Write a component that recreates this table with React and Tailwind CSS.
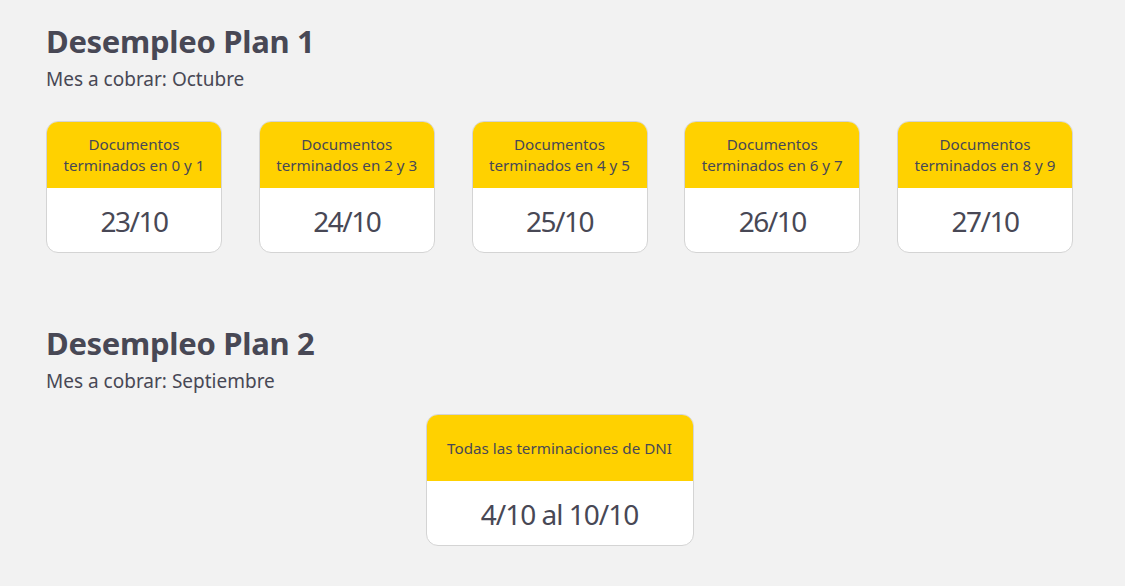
export default function App() {
  const cards = [
    ["0 y 1", "23/10"],
    ["2 y 3", "24/10"],
    ["4 y 5", "25/10"],
    ["6 y 7", "26/10"],
    ["8 y 9", "27/10"],
  ];
  const font = { fontFamily: '"Noto Sans", "Open Sans", sans-serif' };
  return (
    <div className="min-h-[586px] w-full bg-[#f2f2f2] text-[#484855]" style={font}>
      <div className="pl-[46px] pt-[20px] w-[1073px]">
        <h1 className="text-[31px] font-bold leading-[42px] tracking-[-0.3px]">Desempleo Plan 1</h1>
        <p className="text-[19px] leading-[26px] mt-[4px]">Mes a cobrar: Octubre</p>
        <div className="flex justify-between mt-[29px]">
          {cards.map(([t, d]) => (
            <div key={t} className="w-[176px] h-[132px] rounded-[12px] overflow-hidden border border-[#d4d4d4] bg-white flex flex-col">
              <div className="h-[66px] bg-[#ffd100] flex items-center justify-center text-center text-[15.2px] leading-[21px] px-1">
                <span>Documentos<br />terminados en {t}</span>
              </div>
              <div className="flex-1 flex items-center justify-center text-[28px] tracking-[-1.5px] pt-[2px]">{d}</div>
            </div>
          ))}
        </div>
        <h1 className="text-[31px] font-bold leading-[42px] tracking-[-0.3px] mt-[69px]">Desempleo Plan 2</h1>
        <p className="text-[19px] leading-[26px] mt-[4px]">Mes a cobrar: Septiembre</p>
        <div className="flex justify-center mt-[20px]">
          <div className="w-[268px] h-[132px] rounded-[12px] overflow-hidden border border-[#d4d4d4] bg-white flex flex-col">
            <div className="h-[66px] bg-[#ffd100] flex items-center justify-center text-center text-[15.2px] leading-[21px] px-1">
              Todas las terminaciones de DNI
            </div>
            <div className="flex-1 flex items-center justify-center text-[28px] tracking-[-1px] pt-[2px]">4/10 al 10/10</div>
          </div>
        </div>
      </div>
    </div>
  );
}
